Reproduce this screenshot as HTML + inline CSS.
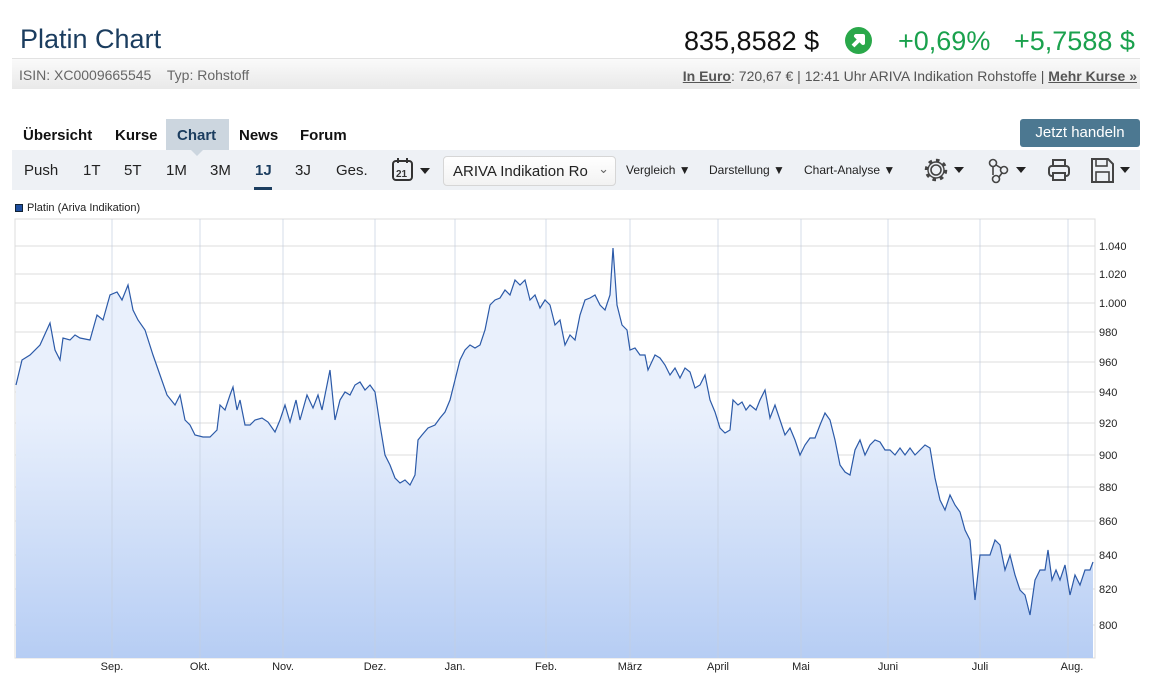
<!DOCTYPE html>
<html><head><meta charset="utf-8"><style>
*{margin:0;padding:0;box-sizing:border-box}
body{width:1152px;height:680px;background:#fff;font-family:"Liberation Sans",sans-serif;position:relative;overflow:hidden}
.a{position:absolute;white-space:nowrap}
</style></head><body>
<div class="a" style="left:20px;top:24px;font-size:27px;color:#1b3d5f">Platin Chart</div>
<div class="a" style="left:684px;top:26px;font-size:27px;color:#111">835,8582 $</div>
<div class="a" style="left:845px;top:27px;width:27px;height:27px;border-radius:50%;background:#2aa84a"></div>
<svg class="a" style="left:845px;top:27px" width="27" height="27" viewBox="0 0 27 27"><path d="M8 19 L17 10 M11 9 L18 9 L18 16 Z" stroke="#fff" stroke-width="4" fill="#fff" stroke-linejoin="round"/></svg>
<div class="a" style="left:898px;top:26px;font-size:27px;color:#1aa14d">+0,69%</div>
<div class="a" style="left:1014px;top:26px;font-size:27px;color:#1aa14d">+5,7588 $</div>
<div class="a" style="left:12px;top:58px;width:1128px;height:31px;border-top:1px solid #e2e2e2;background:linear-gradient(#fafafa,#e9e9e9)"></div>
<div class="a" style="left:19px;top:67px;font-size:14px;color:#666">ISIN: XC0009665545&nbsp;&nbsp;&nbsp;&nbsp;Typ: Rohstoff</div>
<div class="a" style="right:15px;top:68px;font-size:14px;color:#555"><b style="text-decoration:underline;color:#555">In Euro</b>: 720,67 € | 12:41 Uhr ARIVA Indikation Rohstoffe | <b style="text-decoration:underline">Mehr Kurse »</b></div>
<div class="a" style="left:166px;top:119px;width:63px;height:31px;background:#ccd6df"></div>
<div class="a" style="left:189px;top:148px;width:0;height:0;border-left:8px solid transparent;border-right:8px solid transparent;border-top:8px solid #ccd6df;z-index:2"></div>
<div class="a" style="left:23px;top:127px;font-size:15px;font-weight:bold;color:#111">Übersicht</div>
<div class="a" style="left:115px;top:127px;font-size:15px;font-weight:bold;color:#111">Kurse</div>
<div class="a" style="left:177px;top:127px;font-size:15px;font-weight:bold;color:#1b3d5f">Chart</div>
<div class="a" style="left:239px;top:127px;font-size:15px;font-weight:bold;color:#111">News</div>
<div class="a" style="left:300px;top:127px;font-size:15px;font-weight:bold;color:#111">Forum</div>
<div class="a" style="left:1020px;top:119px;width:120px;height:28px;border-radius:3px;background:#4c7891;color:#fff;font-size:15px;text-align:center;line-height:28px">Jetzt handeln</div>
<div class="a" style="left:12px;top:150px;width:1128px;height:40px;background:#eef1f5"></div>
<div class="a" style="left:24px;top:162px;font-size:15px;color:#222">Push</div>
<div class="a" style="left:83px;top:162px;font-size:15px;color:#222">1T</div>
<div class="a" style="left:124px;top:162px;font-size:15px;color:#222">5T</div>
<div class="a" style="left:166px;top:162px;font-size:15px;color:#222">1M</div>
<div class="a" style="left:210px;top:162px;font-size:15px;color:#222">3M</div>
<div class="a" style="left:255px;top:162px;font-size:15px;font-weight:bold;color:#1b3d5f">1J</div>
<div class="a" style="left:254px;top:187px;width:18px;height:3px;background:#1b3d5f"></div>
<div class="a" style="left:295px;top:162px;font-size:15px;color:#222">3J</div>
<div class="a" style="left:336px;top:162px;font-size:15px;color:#222">Ges.</div>
<svg class="a" style="left:390px;top:157px" width="44" height="26"><rect x="3" y="4" width="19" height="19" rx="3" fill="none" stroke="#333" stroke-width="2"/><line x1="8" y1="1" x2="8" y2="6" stroke="#333" stroke-width="2"/><line x1="17" y1="1" x2="17" y2="6" stroke="#333" stroke-width="2"/><text x="6" y="20" font-size="10" font-weight="bold" font-family="Liberation Sans" fill="#333">21</text><path d="M30 11 L40 11 L35 17Z" fill="#222"/></svg>
<div class="a" style="left:443px;top:156px;width:173px;height:30px;border:1px solid #d6d6d6;border-radius:4px;background:linear-gradient(#fff,#f2f2f2);font-size:15px;color:#222;padding:6px 9px;overflow:hidden">ARIVA Indikation Ro<span style="position:absolute;right:6px;top:4px;color:#666;font-size:13px">⌄</span></div>
<div class="a" style="left:626px;top:163px;font-size:12px;color:#222">Vergleich ▼</div>
<div class="a" style="left:709px;top:163px;font-size:12px;color:#222">Darstellung ▼</div>
<div class="a" style="left:804px;top:163px;font-size:12px;color:#222">Chart-Analyse ▼</div>
<svg class="a" style="left:922px;top:156px" width="220" height="30" viewBox="0 0 220 30">
<circle cx="14" cy="14" r="5" fill="none" stroke="#444" stroke-width="1.6"/><circle cx="14" cy="14" r="9.5" fill="none" stroke="#444" stroke-width="3.5" stroke-dasharray="3.5 3.9"/><circle cx="14" cy="14" r="8" fill="none" stroke="#444" stroke-width="1.4"/>
<path d="M32 11 L42 11 L37 17Z" fill="#222"/>
<circle cx="71" cy="7" r="3.5" fill="none" stroke="#444" stroke-width="1.6"/><circle cx="82" cy="14" r="3.5" fill="none" stroke="#444" stroke-width="1.6"/><circle cx="74" cy="23" r="3.5" fill="none" stroke="#444" stroke-width="1.6"/><path d="M71 10 L71 19 M74 9 L79 12 M77 21 L80 17" stroke="#444" stroke-width="1.6"/>
<path d="M94 11 L104 11 L99 17Z" fill="#222"/>
<rect x="127" y="10" width="20" height="10" rx="3" fill="none" stroke="#444" stroke-width="2"/><rect x="131" y="4" width="12" height="6" fill="none" stroke="#444" stroke-width="2"/><rect x="131" y="17" width="12" height="7" fill="#eef1f5" stroke="#444" stroke-width="2"/>
<path d="M170 3 H186 L191 8 V26 H170 Z" fill="none" stroke="#444" stroke-width="2"/><rect x="174" y="3" width="11" height="7" fill="none" stroke="#444" stroke-width="1.6"/><rect x="174" y="16" width="13" height="10" fill="none" stroke="#444" stroke-width="1.6"/>
<path d="M198 11 L208 11 L203 17Z" fill="#222"/>
</svg>
<div class="a" style="left:15px;top:204px;width:8px;height:8px;background:#1f4fa0;border:1px solid #123"></div>
<div class="a" style="left:27px;top:202px;font-size:11px;color:#222">Platin (Ariva Indikation)</div>
<svg class="a" style="left:0;top:0" width="1152" height="680">
<defs><linearGradient id="g" x1="0" y1="0" x2="0" y2="1"><stop offset="0.4" stop-color="#e9f0fc"/><stop offset="1" stop-color="#b6cdf4"/></linearGradient></defs>
<rect x="15" y="219" width="1080" height="439" fill="#fff" stroke="#ddd"/>
<g stroke="#dcdcdc" stroke-width="1">
<line x1="15" y1="246" x2="1095" y2="246"/><line x1="15" y1="274" x2="1095" y2="274"/><line x1="15" y1="303" x2="1095" y2="303"/><line x1="15" y1="332" x2="1095" y2="332"/><line x1="15" y1="362" x2="1095" y2="362"/><line x1="15" y1="392" x2="1095" y2="392"/><line x1="15" y1="423" x2="1095" y2="423"/><line x1="15" y1="455" x2="1095" y2="455"/><line x1="15" y1="487" x2="1095" y2="487"/><line x1="15" y1="521" x2="1095" y2="521"/><line x1="15" y1="555" x2="1095" y2="555"/><line x1="15" y1="589" x2="1095" y2="589"/><line x1="15" y1="625" x2="1095" y2="625"/>
</g>
<polygon fill="url(#g)" points="16,658 16,385 22,360 30,355 40,345 50,323 55,350 60,360 63,338 70,340 75,335 80,338 90,340 97,315 103,320 110,295 117,292 122,300 128,285 133,310 138,320 145,330 153,355 160,375 167,395 175,405 180,395 185,420 190,425 195,435 203,437 210,437 217,430 220,405 225,410 230,395 233,387 237,410 240,400 245,425 250,425 255,420 262,418 268,422 275,432 280,420 285,405 290,422 296,400 300,420 307,395 313,408 318,395 322,410 330,370 335,420 340,400 345,392 350,395 355,385 360,382 365,390 370,385 375,392 380,425 385,455 390,465 395,478 400,483 405,480 410,485 415,475 418,440 422,435 428,428 435,425 440,418 445,412 450,400 455,380 460,360 465,350 470,345 475,348 480,345 485,330 490,305 495,300 500,298 505,290 510,295 515,280 520,285 525,280 530,300 535,295 540,308 545,300 550,305 555,325 560,320 565,345 570,335 575,340 580,315 585,300 590,298 595,295 600,305 605,310 610,295 613,248 617,305 622,325 627,330 630,350 635,348 640,355 645,355 648,370 655,355 660,358 665,365 670,375 675,368 680,378 685,368 690,372 695,388 700,385 705,375 710,400 715,412 720,428 725,433 730,430 733,400 738,405 742,402 746,410 750,405 756,410 760,400 765,390 770,418 775,405 780,420 785,435 790,428 795,440 800,455 805,445 810,438 815,438 820,425 825,413 830,420 835,440 840,465 845,472 850,475 855,450 860,440 865,455 870,445 875,440 880,442 885,450 890,450 895,455 900,448 905,455 910,448 915,455 920,450 925,445 930,448 935,478 940,500 945,510 950,495 955,505 960,512 965,530 970,540 975,600 980,555 985,555 990,555 995,540 1000,545 1005,570 1010,555 1015,575 1020,590 1025,595 1030,615 1035,580 1040,570 1045,570 1048,550 1052,580 1056,570 1060,580 1065,565 1070,595 1075,575 1080,585 1085,570 1090,570 1093,562 1093,658"/>
<g stroke="#c4cfe0" stroke-width="1" opacity="0.7">
<line x1="112" y1="219" x2="112" y2="658"/><line x1="200" y1="219" x2="200" y2="658"/><line x1="283" y1="219" x2="283" y2="658"/><line x1="375" y1="219" x2="375" y2="658"/><line x1="455" y1="219" x2="455" y2="658"/><line x1="546" y1="219" x2="546" y2="658"/><line x1="630" y1="219" x2="630" y2="658"/><line x1="718" y1="219" x2="718" y2="658"/><line x1="801" y1="219" x2="801" y2="658"/><line x1="888" y1="219" x2="888" y2="658"/><line x1="980" y1="219" x2="980" y2="658"/><line x1="1068" y1="219" x2="1068" y2="658"/>
</g>
<polyline fill="none" stroke="#2c5aa8" stroke-width="1.2" points="16,385 22,360 30,355 40,345 50,323 55,350 60,360 63,338 70,340 75,335 80,338 90,340 97,315 103,320 110,295 117,292 122,300 128,285 133,310 138,320 145,330 153,355 160,375 167,395 175,405 180,395 185,420 190,425 195,435 203,437 210,437 217,430 220,405 225,410 230,395 233,387 237,410 240,400 245,425 250,425 255,420 262,418 268,422 275,432 280,420 285,405 290,422 296,400 300,420 307,395 313,408 318,395 322,410 330,370 335,420 340,400 345,392 350,395 355,385 360,382 365,390 370,385 375,392 380,425 385,455 390,465 395,478 400,483 405,480 410,485 415,475 418,440 422,435 428,428 435,425 440,418 445,412 450,400 455,380 460,360 465,350 470,345 475,348 480,345 485,330 490,305 495,300 500,298 505,290 510,295 515,280 520,285 525,280 530,300 535,295 540,308 545,300 550,305 555,325 560,320 565,345 570,335 575,340 580,315 585,300 590,298 595,295 600,305 605,310 610,295 613,248 617,305 622,325 627,330 630,350 635,348 640,355 645,355 648,370 655,355 660,358 665,365 670,375 675,368 680,378 685,368 690,372 695,388 700,385 705,375 710,400 715,412 720,428 725,433 730,430 733,400 738,405 742,402 746,410 750,405 756,410 760,400 765,390 770,418 775,405 780,420 785,435 790,428 795,440 800,455 805,445 810,438 815,438 820,425 825,413 830,420 835,440 840,465 845,472 850,475 855,450 860,440 865,455 870,445 875,440 880,442 885,450 890,450 895,455 900,448 905,455 910,448 915,455 920,450 925,445 930,448 935,478 940,500 945,510 950,495 955,505 960,512 965,530 970,540 975,600 980,555 985,555 990,555 995,540 1000,545 1005,570 1010,555 1015,575 1020,590 1025,595 1030,615 1035,580 1040,570 1045,570 1048,550 1052,580 1056,570 1060,580 1065,565 1070,595 1075,575 1080,585 1085,570 1090,570 1093,562"/>
<g font-family="Liberation Sans" font-size="11" fill="#222">
<text x="1099" y="250">1.040</text><text x="1099" y="278">1.020</text><text x="1099" y="307">1.000</text><text x="1099" y="336">980</text><text x="1099" y="366">960</text><text x="1099" y="396">940</text><text x="1099" y="427">920</text><text x="1099" y="459">900</text><text x="1099" y="491">880</text><text x="1099" y="525">860</text><text x="1099" y="559">840</text><text x="1099" y="593">820</text><text x="1099" y="629">800</text>
</g>
<g font-family="Liberation Sans" font-size="11" fill="#222" text-anchor="middle">
<text x="112" y="670">Sep.</text><text x="200" y="670">Okt.</text><text x="283" y="670">Nov.</text><text x="375" y="670">Dez.</text><text x="455" y="670">Jan.</text><text x="546" y="670">Feb.</text><text x="630" y="670">März</text><text x="718" y="670">April</text><text x="801" y="670">Mai</text><text x="888" y="670">Juni</text><text x="980" y="670">Juli</text><text x="1072" y="670">Aug.</text>
</g>
</svg>
</body></html>
